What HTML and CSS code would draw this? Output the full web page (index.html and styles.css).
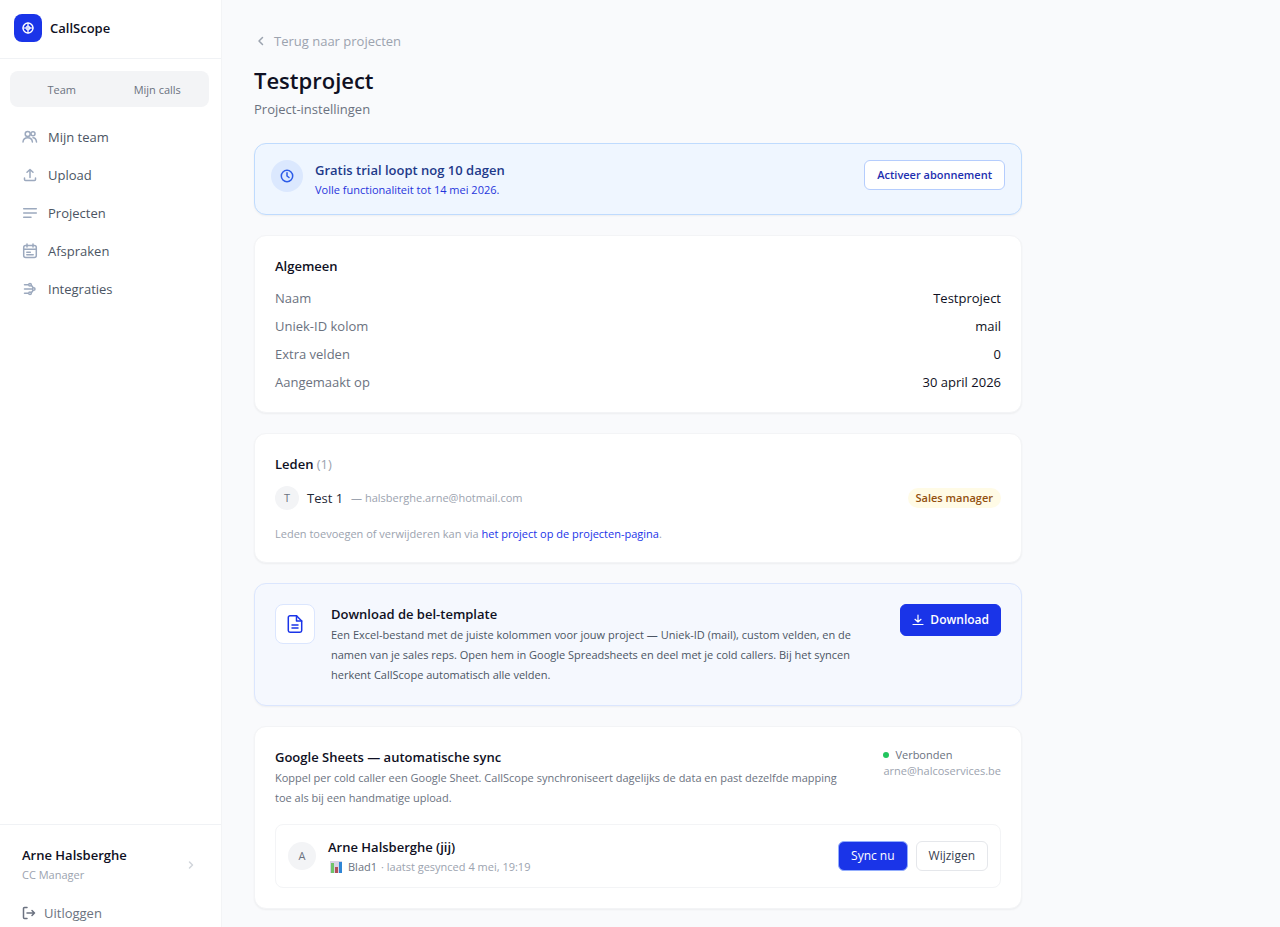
FILE: index.html
```
<!DOCTYPE html>
<html lang="nl">
<head>
  <meta charset="UTF-8" />
  <meta name="viewport" content="width=device-width, initial-scale=1.0" />
  <title>Testproject - CallScope</title>
  <link rel="stylesheet" href="styles.css">
</head>
<body>
  <div class="app">
    <aside class="sidebar">
      <div class="brand">
        <span class="brand-logo">
          <svg width="14" height="14" viewBox="0 0 14 14" fill="none" stroke="currentColor">
            <circle cx="7" cy="7" r="5" stroke-width="1.4" />
            <path d="M7 2v10M2 7h10" stroke-width="1.2" />
            <circle cx="7" cy="7" r="2" stroke-width="1" />
          </svg>
        </span>
        <span class="brand-name">CallScope</span>
      </div>

      <div class="switch">
        <button type="button">Team</button>
        <button type="button">Mijn calls</button>
      </div>

      <nav class="menu">
        <a href="#team">
          <svg width="16" height="16" viewBox="0 0 16 16">
            <circle cx="5.700" cy="5" r="2.500" />
            <circle cx="11" cy="4.700" r="2" />
            <path d="M1 13c.2-2.500 2-4.200 4.700-4.200s4.500 1.700 4.700 4.200M11 8.700c2 0 3.200 1.500 3.500 4.300" />
          </svg>
          Mijn team
        </a>
        <a href="#upload">
          <svg width="16" height="16" viewBox="0 0 16 16">
            <path d="M8 10.500V2.500M5 5.300l3-2.800 3 2.800M2.500 11v1.500a1 1 0 0 0 1 1h9a1 1 0 0 0 1-1V11" />
          </svg>
          Upload
        </a>
        <a href="#projecten">
          <svg width="16" height="16" viewBox="0 0 16 16">
            <path d="M1.700 3.800h12.600M1.700 8h12.600M1.700 12.200h7.300" />
          </svg>
          Projecten
        </a>
        <a href="#afspraken">
          <svg width="16" height="16" viewBox="0 0 16 16">
            <rect x="1.700" y="2.500" width="12.600" height="12" rx="2" />
            <path d="M1.700 6.300h12.600M5 1v3M11 1v3M4.800 9.300h3.500M4.800 11.700h6.400" />
          </svg>
          Afspraken
        </a>
        <a href="#integraties">
          <svg width="16" height="16" viewBox="0 0 16 16">
            <circle cx="8" cy="3.700" r="1.300" />
            <circle cx="11.700" cy="8" r="1.300" />
            <circle cx="8" cy="12.300" r="1.300" />
            <path d="M2.500 3.700H6M2.500 8h7M2.500 12.300H6M9.500 4.500l1.500 2M9.500 11.500l1.500-2" />
          </svg>
          Integraties
        </a>
      </nav>

      <div class="sidebar-footer">
        <a class="account" href="#account">
          <span>
            <span class="account-name">Arne Halsberghe</span>
            <span class="account-role">CC Manager</span>
          </span>
          <svg width="12" height="12" viewBox="0 0 12 12"><path d="M4.500 3L7.500 6l-3 3" /></svg>
        </a>
        <button type="button" class="logout">
          <svg width="14" height="14" viewBox="0 0 14 14">
            <path d="M5 1.500H2.500a1 1 0 0 0-1 1v9a1 1 0 0 0 1 1H5M5 7h7.500M10 4.500L12.500 7 10 9.500" />
          </svg>
          Uitloggen
        </button>
      </div>
    </aside>

    <main class="content">
      <a class="back" href="#projecten">
        <svg width="14" height="14" viewBox="0 0 14 14"><path d="M8.500 3.500L5 7l3.500 3.500" /></svg>
        Terug naar projecten
      </a>
      <h1>Testproject</h1>
      <p class="subtitle">Project-instellingen</p>

      <section class="card trial">
        <span class="trial-icon">
          <svg width="16" height="16" viewBox="0 0 16 16">
            <circle cx="8" cy="8" r="5.700" />
            <path d="M8 4.700V8l2 1.500" />
          </svg>
        </span>
        <div class="grow">
          <h2>Gratis trial loopt nog 10 dagen</h2>
          <p>Volle functionaliteit tot 14 mei 2026.</p>
        </div>
        <button type="button" class="btn btn-outline">Activeer abonnement</button>
      </section>

      <section class="card">
        <h2>Algemeen</h2>
        <dl class="details">
          <div><dt>Naam</dt><dd>Testproject</dd></div>
          <div><dt>Uniek-ID kolom</dt><dd>mail</dd></div>
          <div><dt>Extra velden</dt><dd>0</dd></div>
          <div><dt>Aangemaakt op</dt><dd>30 april 2026</dd></div>
        </dl>
      </section>

      <section class="card">
        <h2>Leden <span class="count">(1)</span></h2>
        <div class="member">
          <span class="avatar">T</span>
          <span class="member-name">Test 1</span>
          <span class="member-mail">— halsberghe.arne@hotmail.com</span>
          <span class="badge">Sales manager</span>
        </div>
        <p class="hint">Leden toevoegen of verwijderen kan via <a href="#projecten">het project op de projecten-pagina</a>.</p>
      </section>

      <section class="card template">
        <span class="template-icon">
          <svg width="20" height="20" viewBox="0 0 20 20">
            <path d="M11.500 1.800H5a1.700 1.700 0 0 0-1.700 1.700v13A1.700 1.700 0 0 0 5 18.200h10a1.700 1.700 0 0 0 1.700-1.700V7z" />
            <path d="M11.500 1.800V7h5.200M7 11h6M7 14h6" />
          </svg>
        </span>
        <div class="grow">
          <h2>Download de bel-template</h2>
          <p>Een Excel-bestand met de juiste kolommen voor jouw project — Uniek-ID (mail), custom velden, en de namen van je sales reps. Open hem in Google Spreadsheets en deel met je cold callers. Bij het syncen herkent CallScope automatisch alle velden.</p>
        </div>
        <button type="button" class="btn btn-download">
          <svg width="12" height="12" viewBox="0 0 12 12"><path d="M6 1v7M3 5.300L6 8l3-2.700M1 10.500h10" /></svg>
          Download
        </button>
      </section>

      <section class="card">
        <div class="sync-header">
          <div class="grow">
            <h2>Google Sheets — automatische sync</h2>
            <p>Koppel per cold caller een Google Sheet. CallScope synchroniseert dagelijks de data en past dezelfde mapping toe als bij een handmatige upload.</p>
          </div>
          <div class="status">
            <span class="status-label">Verbonden</span>
            <span class="status-mail">arne@halcoservices.be</span>
          </div>
        </div>
        <div class="sheet">
          <span class="avatar avatar-lg">A</span>
          <div class="grow">
            <h3>Arne Halsberghe (jij)</h3>
            <p>
              <svg width="16" height="14" viewBox="0 0 16 14">
                <rect x="2" y="1" width="12" height="12" fill="#d9d3e6" />
                <rect x="3" y="3" width="3" height="10" fill="#6fc36a" />
                <rect x="7" y="7" width="3" height="6" fill="#b0505a" />
                <rect x="11" y="2" width="3" height="11" fill="#2f86d6" />
              </svg>
              <span class="sheet-name">Blad1</span> · laatst gesynced 4 mei, 19:19
            </p>
          </div>
          <div class="sheet-actions">
            <button type="button" class="btn btn-primary">Sync nu</button>
            <button type="button" class="btn">Wijzigen</button>
          </div>
        </div>
      </section>
    </main>
  </div>
</body>
</html>
```
FILE: styles.css
```
* {
  box-sizing: border-box;
}

body {
  margin: 0;
  font-family: 'Segoe UI', 'Open Sans', 'Noto Sans', sans-serif;
  font-size: 13px;
  line-height: 20px;
  color: #0f1023;
  background-color: #f9fafc;
}

h1, h2, h3, p, dl, dd {
  margin: 0;
}

a {
  color: inherit;
  text-decoration: none;
}

button {
  font: inherit;
  cursor: pointer;
}

svg {
  flex-shrink: 0;
  fill: none;
  stroke: currentColor;
  stroke-width: 1.5;
  stroke-linecap: round;
  stroke-linejoin: round;
}

.app {
  display: flex;
  align-items: flex-start;
  min-height: 100vh;
}

.grow {
  flex: 1;
  min-width: 0;
}

/* sidebar */

.sidebar {
  position: sticky;
  top: 0;
  display: flex;
  flex-direction: column;
  flex-shrink: 0;
  width: 222px;
  height: 100vh;
  background-color: #ffffff;
  border-right: 1px solid #f3f4f6;
}

.brand {
  display: flex;
  align-items: center;
  gap: 8px;
  padding: 14px 14px 16px;
  border-bottom: 1px solid #f0f2f5;
}

.brand-logo {
  display: flex;
  align-items: center;
  justify-content: center;
  width: 28px;
  height: 28px;
  border-radius: 8px;
  background-color: #1a34e8;
  color: #ffffff;
}

.brand-name {
  font-weight: 600;
}

.switch {
  display: flex;
  margin: 12px 12px 12px 10px;
  padding: 4px;
  border-radius: 8px;
  background-color: #f3f4f6;
}

.switch button {
  flex: 1;
  padding: 5px 4px 3px;
  border: none;
  border-radius: 6px;
  background: none;
  color: #6b7280;
  font-size: 11px;
}

.menu {
  display: flex;
  flex-direction: column;
  flex: 1;
  gap: 2px;
  padding: 0 10px;
}

.menu a {
  display: flex;
  align-items: center;
  gap: 10px;
  padding: 8px 12px;
  border-radius: 8px;
  color: #4b5563;
}

.menu a:hover {
  background-color: #f9fafb;
}

.menu svg {
  color: #9ca9be;
}

.sidebar-footer {
  padding: 12px 10px 0;
  border-top: 1px solid #f0f2f5;
}

.account {
  display: flex;
  align-items: center;
  justify-content: space-between;
  padding: 8px 14px 8px 12px;
}

.account svg {
  color: #d1d5db;
}

.account-name,
.account-role {
  display: block;
}

.account-name {
  font-weight: 600;
}

.account-role {
  font-size: 11px;
  color: #9ca3af;
}

.logout {
  display: flex;
  align-items: center;
  gap: 8px;
  width: 100%;
  margin-top: 6px;
  padding: 4px 12px;
  border: none;
  background: none;
  color: #6b7280;
}

/* content */

.content {
  flex: 1;
  min-width: 0;
  max-width: 832px;
  padding: 32px;
}

.back {
  display: flex;
  align-items: center;
  gap: 6px;
  width: fit-content;
  margin-bottom: 14px;
  line-height: 18px;
  color: #9ca3af;
}

h1 {
  font-size: 22px;
  line-height: 32px;
  font-weight: 600;
}

h2, h3 {
  font-size: 13px;
  line-height: 20px;
  font-weight: 600;
}

.subtitle {
  margin-top: 3px;
  margin-bottom: 24px;
  color: #6b7280;
}

.card {
  margin-bottom: 20px;
  padding: 20px;
  border: 1px solid #f3f4f6;
  border-radius: 12px;
  background-color: #ffffff;
  box-shadow: 0 1px 2px rgba(0, 0, 0, 0.05);
}

.card p {
  font-size: 11px;
}

.btn {
  padding: 4px 12px;
  border: 1px solid #e5e7eb;
  border-radius: 6px;
  background-color: #ffffff;
  color: #374151;
  font-size: 12px;
  white-space: nowrap;
}

.btn-primary {
  border-color: #93adfd;
  background-color: #1a34e8;
  color: #ffffff;
}

.btn-outline {
  border-color: #b5cdfd;
  color: #1e2fb0;
  font-size: 11px;
  font-weight: 600;
}

.btn-download {
  display: flex;
  align-items: center;
  gap: 6px;
  padding: 5px 11px;
  border-color: #1a34e8;
  background-color: #1a34e8;
  color: #ffffff;
  font-weight: 600;
}

.btn-download svg {
  stroke-width: 1.2;
}

.trial {
  display: flex;
  align-items: flex-start;
  gap: 12px;
  padding: 16px;
  border-color: #bfdbfe;
  background-color: #eff6ff;
}

.trial-icon {
  display: flex;
  align-items: center;
  justify-content: center;
  width: 32px;
  height: 32px;
  border-radius: 50%;
  background-color: #dbe8fe;
  color: #2b5be8;
}

.trial h2 {
  color: #1e3a8a;
}

.trial p {
  margin-top: 2px;
  line-height: 16px;
  color: #1f35dc;
}

.details {
  display: flex;
  flex-direction: column;
  gap: 8px;
  margin-top: 12px;
}

.details div {
  display: flex;
  justify-content: space-between;
}

.details dt {
  color: #6b7280;
}

.count {
  color: #9ca3af;
  font-weight: 400;
}

.member {
  display: flex;
  align-items: center;
  gap: 8px;
  margin-top: 12px;
}

.avatar {
  display: flex;
  align-items: center;
  justify-content: center;
  flex-shrink: 0;
  width: 24px;
  height: 24px;
  border-radius: 50%;
  background-color: #f3f4f6;
  color: #6b7280;
  font-size: 11px;
}

.avatar-lg {
  width: 28px;
  height: 28px;
}

.member-name {
  color: #1f2937;
}

.member-mail {
  color: #9ca3af;
  font-size: 11px;
}

.badge {
  margin-left: auto;
  padding: 0 8px;
  border-radius: 10px;
  background-color: #fffbe6;
  color: #92500e;
  font-size: 11px;
  font-weight: 600;
}

.card .hint {
  margin-top: 16px;
  line-height: 16px;
  color: #9ca3af;
}

.hint a {
  color: #1a34e8;
}

.template {
  display: flex;
  align-items: flex-start;
  gap: 16px;
  border-color: #dbe6fe;
  background-color: #f5f8fe;
}

.template-icon {
  display: flex;
  align-items: center;
  justify-content: center;
  width: 40px;
  height: 40px;
  border: 1px solid #dbe6fe;
  border-radius: 8px;
  background-color: #ffffff;
  color: #1a34e8;
}

.template p {
  max-width: 544px;
  margin-top: 1px;
  color: #4b5563;
}

.sync-header {
  display: flex;
  align-items: flex-start;
  gap: 16px;
}

.sync-header p {
  max-width: 576px;
  margin-top: 1px;
  color: #6b7280;
}

.status {
  font-size: 11px;
  line-height: 16px;
}

.status-label {
  display: flex;
  align-items: center;
  gap: 6px;
  color: #6b7280;
}

.status-label::before {
  content: '';
  width: 6px;
  height: 6px;
  border-radius: 50%;
  background-color: #22c55e;
}

.status-mail {
  color: #9ca3af;
}

.sheet {
  display: flex;
  align-items: center;
  gap: 12px;
  margin-top: 16px;
  padding: 12px;
  border: 1px solid #f3f4f6;
  border-radius: 8px;
}

.sheet p {
  display: flex;
  align-items: center;
  gap: 4px;
  margin-top: 2px;
  line-height: 16px;
  color: #9ca3af;
}

.sheet p svg {
  stroke: none;
}

.sheet-name {
  color: #6b7280;
}

.sheet-actions {
  display: flex;
  gap: 8px;
}
```
